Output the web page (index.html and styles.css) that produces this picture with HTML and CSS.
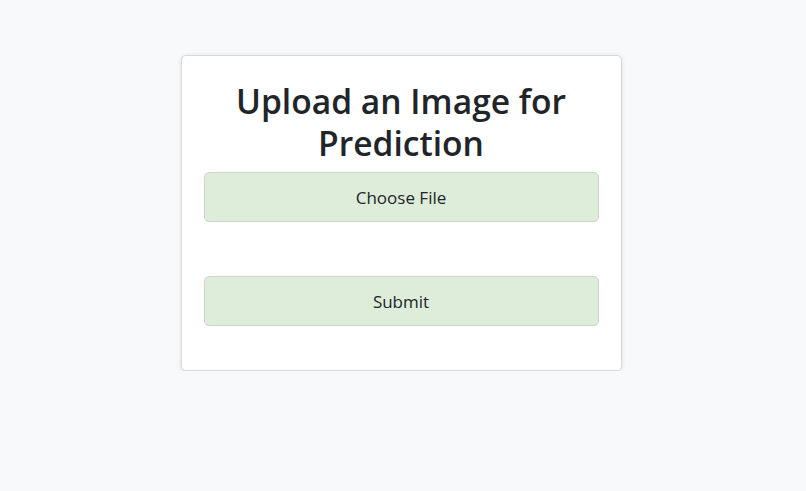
FILE: index.html
```html
<!DOCTYPE html>
<html>
<head>
<meta charset="utf-8">
<link rel="stylesheet" href="styles.css">
</head>
<body>
<main class="page">
  <form class="card">
    <h2 class="title">Upload an Image for Prediction</h2>
    <label class="btn file-btn">Choose File</label>
    <button type="button" class="btn submit-btn">Submit</button>
  </form>
</main>
</body>
</html>
```
FILE: styles.css
```css
html, body {
  margin: 0;
  padding: 0;
  background: #f8f9fa;
  font-family: "Open Sans", "Noto Sans", "DejaVu Sans", sans-serif;
  color: #212529;
}
.page {
  display: flex;
  justify-content: center;
  padding: 55px 4px 0 0;
}
.card {
  width: 441px;
  box-sizing: border-box;
  background: #fff;
  border: 1px solid #d8d8d8;
  border-radius: 5px;
  box-shadow: 0 1px 5px rgba(0,0,0,0.1);
  padding: 24px 22px 44px;
  display: flex;
  flex-direction: column;
}
.title {
  margin: 0 0 8px;
  font-size: 33.6px;
  font-weight: 600;
  line-height: 42px;
  text-align: center;
  color: #212529;
}
.btn {
  display: flex;
  align-items: center;
  justify-content: center;
  height: 50px;
  box-sizing: border-box;
  background: #deecda;
  border: 1px solid #cbd3c9;
  border-radius: 5px;
  font-family: inherit;
  font-size: 17px;
  color: #212529;
}
.submit-btn {
  margin-top: 54px;
}
```
